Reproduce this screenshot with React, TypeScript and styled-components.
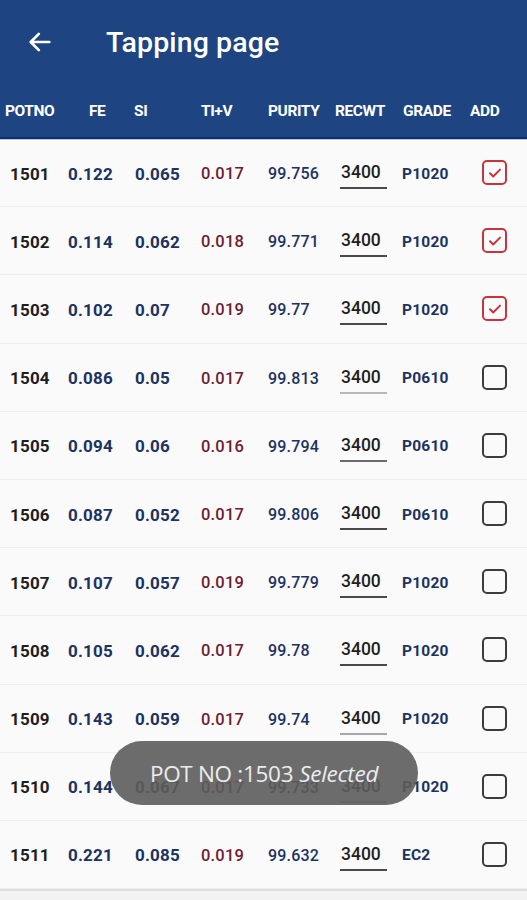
import React from "react";
import styled, { createGlobalStyle } from "styled-components";

const Global = createGlobalStyle`
  html, body { margin: 0; padding: 0; background: #fafafa; }
  body { font-family: Roboto, "Noto Sans", sans-serif; }
`;

const Page = styled.div`
  position: relative;
  width: 527px;
  height: 900px;
  overflow: hidden;
  background: #fafafa;
`;

const Header = styled.header`
  background: #1e4581;
  border-bottom: 2px solid #0c2d6e;
  box-shadow: 0 1px 0 #b9c6de;
`;

const TitleBar = styled.div`
  height: 84px;
  display: flex;
  align-items: center;
  padding-left: 26px;
  gap: 52px;
`;

const Title = styled.h1`
  margin: 0;
  color: #ffffff;
  font-family: Roboto, sans-serif;
  font-weight: 500;
  font-size: 28.5px;
  letter-spacing: 0.1px;
`;

const cols = "63px 67px 66px 67px 67px 67px 65px 65px";

const HeadRow = styled.div`
  display: grid;
  grid-template-columns: ${cols};
  height: 53px;
  align-items: center;
`;

const HeadCell = styled.div<{ $pad: number }>`
  padding-left: ${(p) => p.$pad}px;
  color: #ffffff;
  font-weight: 700;
  font-size: 15.5px;
  letter-spacing: -0.4px;
  white-space: nowrap;
`;

const Row = styled.div`
  display: grid;
  grid-template-columns: ${cols};
  height: 68.2px;
  align-items: center;
  border-bottom: 1px solid #efefef;
  box-sizing: border-box;
`;

const Cell = styled.div<{ $pad: number; $color: string; $size: number; $weight?: number }>`
  padding-left: ${(p) => p.$pad}px;
  color: ${(p) => p.$color};
  font-size: ${(p) => p.$size}px;
  font-weight: ${(p) => p.$weight ?? 700};
  letter-spacing: 0.2px;
  white-space: nowrap;
  transform: translateY(1px);
`;

const WeightField = styled.div<{ $line: string }>`
  margin-left: 10px;
  width: 47px;
  box-sizing: border-box;
  padding: 0 0 5px 1px;
  border-bottom: 2px solid ${(p) => p.$line};
  color: #1f1f1f;
  font-size: 17.5px;
  font-weight: 500;
  transform: translateY(3px);
`;

const CheckWrap = styled.div`
  padding-left: 20px;
  display: flex;
  align-items: center;
`;

const Box = styled.div<{ $checked: boolean }>`
  width: 21px;
  height: 21px;
  border: 2px solid ${(p) => (p.$checked ? "#c8343c" : "#3c3c3c")};
  border-radius: 5px;
  display: flex;
  align-items: center;
  justify-content: center;
`;

const Footer = styled.div`
  border-top: 2px solid #dedede;
  height: 10px;
  background: #f2f2f2;
`;

const Toast = styled.div`
  position: absolute;
  left: 110px;
  top: 741px;
  width: 308px;
  height: 64px;
  border-radius: 32px;
  background: rgba(92, 92, 92, 0.9);
  display: flex;
  align-items: center;
  justify-content: center;
  color: #ececec;
  font-family: "Open Sans", "Noto Sans", sans-serif;
  font-size: 22.5px;
  letter-spacing: -0.3px;
`;

const Italic = styled.span`
  font-style: italic;
  margin-left: 6px;
`;

type R = [string, string, string, string, string, string, boolean, string];

const data: R[] = [
  ["1501", "0.122", "0.065", "0.017", "99.756", "P1020", true, "#4a4a4a"],
  ["1502", "0.114", "0.062", "0.018", "99.771", "P1020", true, "#4a4a4a"],
  ["1503", "0.102", "0.07", "0.019", "99.77", "P1020", true, "#4a4a4a"],
  ["1504", "0.086", "0.05", "0.017", "99.813", "P0610", false, "#b8b8b8"],
  ["1505", "0.094", "0.06", "0.016", "99.794", "P0610", false, "#6a6a6a"],
  ["1506", "0.087", "0.052", "0.017", "99.806", "P0610", false, "#4a4a4a"],
  ["1507", "0.107", "0.057", "0.019", "99.779", "P1020", false, "#4a4a4a"],
  ["1508", "0.105", "0.062", "0.017", "99.78", "P1020", false, "#4a4a4a"],
  ["1509", "0.143", "0.059", "0.017", "99.74", "P1020", false, "#a8a8a8"],
  ["1510", "0.144", "0.067", "0.017", "99.733", "P1020", false, "#a8a8a8"],
  ["1511", "0.221", "0.085", "0.019", "99.632", "EC2", false, "#4a4a4a"],
];

const NAVY = "#1c3260";

export default function App() {
  return (
    <Page>
      <Global />
      <Header>
        <TitleBar>
          <svg width="28" height="28" viewBox="0 0 24 24" fill="none">
            <path d="M20 12H4.5M11 5l-7 7 7 7" stroke="#fff" strokeWidth="2.3" strokeLinecap="round" strokeLinejoin="round" />
          </svg>
          <Title>Tapping page</Title>
        </TitleBar>
        <HeadRow>
          <HeadCell $pad={5}>POTNO</HeadCell>
          <HeadCell $pad={26}>FE</HeadCell>
          <HeadCell $pad={4}>SI</HeadCell>
          <HeadCell $pad={5}>TI+V</HeadCell>
          <HeadCell $pad={5}>PURITY</HeadCell>
          <HeadCell $pad={5}>RECWT</HeadCell>
          <HeadCell $pad={6}>GRADE</HeadCell>
          <HeadCell $pad={8}>ADD</HeadCell>
        </HeadRow>
      </Header>
      {data.map((r) => (
        <Row key={r[0]}>
          <Cell $pad={10} $color="#1e1e1e" $size={17}>{r[0]}</Cell>
          <Cell $pad={5} $color={NAVY} $size={17}>{r[1]}</Cell>
          <Cell $pad={5} $color={NAVY} $size={17}>{r[2]}</Cell>
          <Cell $pad={5} $color="#6e1d30" $size={16.5} $weight={500}>{r[3]}</Cell>
          <Cell $pad={5} $color={NAVY} $size={16} $weight={500}>{r[4]}</Cell>
          <div>
            <WeightField $line={r[7]}>3400</WeightField>
          </div>
          <Cell $pad={5} $color={NAVY} $size={15.5}>{r[5]}</Cell>
          <CheckWrap>
            <Box $checked={r[6]}>
              {r[6] && (
                <svg width="16" height="16" viewBox="0 0 16 16" fill="none">
                  <path d="M3 8.3l3.2 3.2L13 4.6" stroke="#c8343c" strokeWidth="2" strokeLinecap="round" strokeLinejoin="round" />
                </svg>
              )}
            </Box>
          </CheckWrap>
        </Row>
      ))}
      <Footer />
      <Toast>
        POT NO :1503<Italic>Selected</Italic>
      </Toast>
    </Page>
  );
}
